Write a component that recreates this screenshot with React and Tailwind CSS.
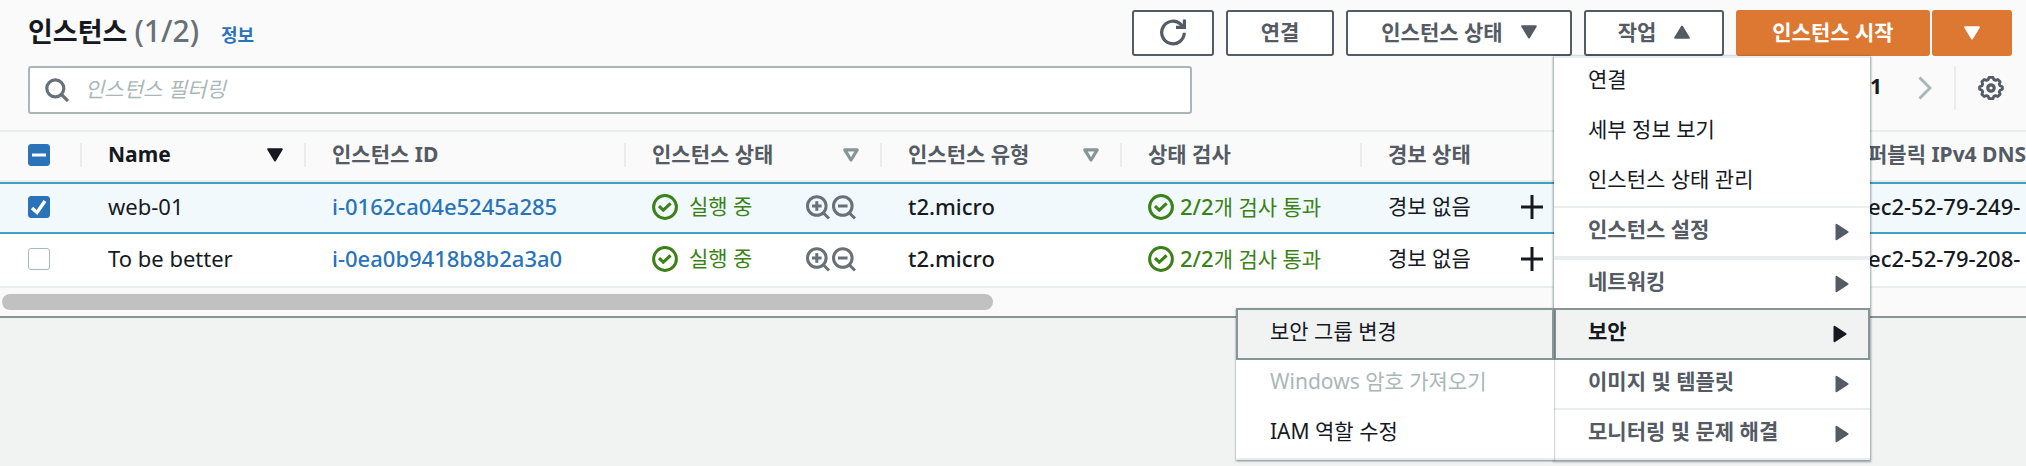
import React, { useState } from "react";

const instances = [
  { name: "web-01", id: "i-0162ca04e5245a285", type: "t2.micro", dns: "ec2-52-79-249-" },
  { name: "To be better", id: "i-0ea0b9418b8b2a3a0", type: "t2.micro", dns: "ec2-52-79-208-" },
];

const columns = [
  { label: "Name", sort: "active" },
  { label: "인스턴스 ID" },
  { label: "인스턴스 상태", sort: "idle" },
  { label: "인스턴스 유형", sort: "idle" },
  { label: "상태 검사" },
  { label: "경보 상태" },
  { label: "" },
  { label: "퍼블릭 IPv4 DNS" },
];

const Triangle = ({ className = "" }) => (
  <svg viewBox="0 0 16 14" className={`w-4 h-[14px] shrink-0 ${className}`} aria-hidden="true">
    <path d="M1.2 1.2h13.6L8 12.5z" fill="currentColor" stroke="currentColor" strokeWidth="2" strokeLinejoin="round" />
  </svg>
);

const HollowTriangle = () => (
  <svg viewBox="0 0 16 14" className="w-4 h-[14px] shrink-0 text-[#879596]" aria-hidden="true">
    <path d="M1.8 1.8h12.4L8 12z" fill="none" stroke="currentColor" strokeWidth="3.2" strokeLinejoin="round" />
  </svg>
);

const RightTriangle = () => (
  <svg viewBox="0 0 14 18" className="w-[14px] h-[18px] shrink-0" aria-hidden="true">
    <path d="M1.5 1.8v14.4L12.6 9z" fill="currentColor" stroke="currentColor" strokeWidth="2" strokeLinejoin="round" />
  </svg>
);

const StatusOk = () => (
  <svg viewBox="0 0 26 26" className="w-[26px] h-[26px] shrink-0" fill="none" stroke="currentColor" strokeWidth="3" aria-hidden="true">
    <circle cx="13" cy="13" r="11.4" />
    <path d="M7 12.2l4.3 4L18.6 9.3" />
  </svg>
);

const ZoomIcon = ({ plus }) => (
  <svg viewBox="0 0 24 26" className="w-6 h-[26px] shrink-0" fill="none" stroke="currentColor" strokeWidth="3" aria-hidden="true">
    <circle cx="10.8" cy="12" r="9.3" />
    <path d="M17 18.5l6 6M6 12h9.6" />
    {plus && <path d="M10.8 7.2v9.6" />}
  </svg>
);

const CheckBox = ({ label, checked, indeterminate, onChange }) => (
  <label className="grid w-[22px] h-[22px]">
    <input
      type="checkbox"
      aria-label={label}
      checked={checked}
      onChange={onChange}
      className="col-start-1 row-start-1 appearance-none w-[22px] h-[22px] rounded-[3px] border border-[#aab7b8] bg-white checked:border-[#2a73b9] checked:bg-[#2a73b9]"
    />
    {checked && (
      <svg viewBox="0 0 22 22" className="col-start-1 row-start-1 w-[22px] h-[22px] pointer-events-none" fill="none" stroke="#fff" strokeWidth="3">
        {indeterminate ? <path d="M4 11h14" /> : <path d="M4 12l5 4.5L17 5" strokeWidth="3.4" />}
      </svg>
    )}
  </label>
);

const MenuItem = ({ children, submenu }) => (
  <button
    role="menuitem"
    className={`flex w-full h-12 items-center justify-between pl-[34px] pr-[21px] text-left ${
      submenu ? "font-bold text-[#545b64]" : ""
    }`}
  >
    <span className="pb-1.5">{children}</span>
    {submenu && <RightTriangle />}
  </button>
);

const ActionsMenu = () => (
  <div
    role="menu"
    className="absolute z-10 top-full -left-[30px] w-[316px] border-y-2 border-[#eaeded] bg-white shadow-[0_1px_2px_1px_rgba(0,28,36,0.4)]"
  >
    <div className="flex flex-col gap-0.5">
      <MenuItem>연결</MenuItem>
      <MenuItem>세부 정보 보기</MenuItem>
      <MenuItem>인스턴스 상태 관리</MenuItem>
    </div>
    <div className="border-t-2 border-b-4 border-[#eaeded]">
      <MenuItem submenu>인스턴스 설정</MenuItem>
    </div>
    <MenuItem submenu>네트워킹</MenuItem>
    <div className="relative">
      <button
        role="menuitem"
        aria-expanded="true"
        className="flex w-full h-[52px] items-center justify-between border-2 border-[#879596] bg-[#f1f3f3] pl-8 pr-[21px] text-left font-bold"
      >
        <span className="pb-1.5">보안</span>
        <RightTriangle />
      </button>
      <div
        role="menu"
        className="absolute top-0 right-full w-[318px] border-b-2 border-[#eaeded] bg-white shadow-[0_1px_2px_0_rgba(0,28,36,0.5)]"
      >
        <button
          role="menuitem"
          className="flex w-full h-[52px] items-center border-2 border-[#879596] bg-[#f1f3f3] pl-8 pb-1.5 text-left"
        >
          보안 그룹 변경
        </button>
        <div className="flex flex-col gap-0.5">
          <button role="menuitem" disabled className="flex h-12 items-center pl-[34px] pb-1.5 text-[#aab7b8]">
            Windows 암호 가져오기
          </button>
          <MenuItem>IAM 역할 수정</MenuItem>
        </div>
      </div>
    </div>
    <MenuItem submenu>이미지 및 템플릿</MenuItem>
    <div className="border-t-2 border-[#eaeded]">
      <MenuItem submenu>모니터링 및 문제 해결</MenuItem>
    </div>
  </div>
);

const buttonClass =
  "flex h-[46px] items-center justify-center rounded-[3px] border-2 border-[#545b64] bg-white pb-0.5 font-bold text-[#545b64]";

const App = () => {
  const [selected, setSelected] = useState([0]);
  const [filter, setFilter] = useState("");

  const toggle = (i) =>
    setSelected(selected.includes(i) ? selected.filter((s) => s !== i) : [...selected, i]);

  return (
    <div className="min-h-screen overflow-hidden bg-[#f1f3f3] font-['Noto_Sans','Noto_Sans_CJK_KR',sans-serif] text-[21px] leading-7 text-[#16191f]">
      <main className="border-b-2 border-[#879596] bg-[#fafafa] pb-1.5">
        {/* Header */}
        <header className="flex items-start justify-between pt-2.5 pl-7 pr-3.5">
          <div className="flex items-baseline">
            <h1 className="text-[27px] leading-[42px] font-bold">
              인스턴스 <span className="text-[30px] font-medium text-[#687078]">({selected.length}/2)</span>
            </h1>
            <a href="#info" className="ml-[22px] text-[18px] font-bold text-[#2a73b9]">정보</a>
          </div>
          <div className="flex gap-3">
            <button aria-label="새로 고침" className={`${buttonClass} w-[82px]`}>
              <svg viewBox="0 0 28 28" className="w-7 h-7" fill="none" stroke="currentColor" strokeWidth="3.2">
                <path d="M25.3 14.8a11.3 11.3 0 1 1-3.2-8.2l2.4 2.6" />
                <path d="M25.4 1.5v7.8h-8.4" />
              </svg>
            </button>
            <button className={`${buttonClass} w-[108px]`}>연결</button>
            <button className={`${buttonClass} w-[226px] gap-[18px]`}>
              인스턴스 상태 <Triangle />
            </button>
            <div className="relative">
              <button aria-expanded="true" className={`${buttonClass} w-[140px] gap-[18px]`}>
                작업 <Triangle className="rotate-180" />
              </button>
              <ActionsMenu />
            </div>
            <div className="flex gap-0.5 font-bold text-white">
              <button className="h-[46px] w-[194px] rounded-[3px] bg-[#dd7833] pb-0.5">인스턴스 시작</button>
              <button aria-label="시작 옵션" className="flex h-[46px] w-20 items-center justify-center rounded-[3px] bg-[#dd7833]">
                <Triangle />
              </button>
            </div>
          </div>
        </header>

        {/* Filter and pagination */}
        <div className="flex items-start justify-between pt-2.5 pb-4 pl-7 pr-[22px]">
          <div className="flex h-12 w-[1164px] items-center rounded-[3px] border-2 border-[#aab7b8] bg-white pl-[15px]">
            <svg viewBox="0 0 24 24" className="w-6 h-6 shrink-0 text-[#687078]" fill="none" stroke="currentColor" strokeWidth="3.2">
              <circle cx="10.3" cy="10.3" r="8.5" />
              <path d="M16 16l7 7" />
            </svg>
            <input
              type="text"
              aria-label="인스턴스 필터링"
              placeholder="인스턴스 필터링"
              value={filter}
              onChange={(e) => setFilter(e.target.value)}
              className="ml-4 w-full pb-0.5 outline-none placeholder:italic placeholder:text-[#aab7b8]"
            />
          </div>
          <div className="flex h-11 items-center">
            <span className="pb-1 font-bold">1</span>
            <button aria-label="다음 페이지" className="ml-9 text-[#aab7b8]">
              <svg viewBox="0 0 14 24" className="w-[14px] h-6" fill="none" stroke="currentColor" strokeWidth="3">
                <path d="M1.5 1.5L12 12 1.5 22.5" />
              </svg>
            </button>
            <button aria-label="기본 설정" className="ml-[22px] h-11 border-l-2 border-[#eaeded] pl-[22px] text-[#545b64]">
              <svg viewBox="0 0 26 26" className="w-[26px] h-[26px]" fill="none" stroke="currentColor" strokeWidth="2.8" strokeLinejoin="round">
                <path d="M11 2.4h4l.8 2.2 1.8.8 2.2-.9 2.4 2.3-.9 2.300.8 1.700 2.300.9v2.600l-2.300.9-.8 1.700.9 2.300-2.400 2.300-2.200-.9-1.800.8-.8 2.200h-4l-.8-2.200-1.800-.8-2.200.9-2.400-2.300.9-2.300-.8-1.700-2.300-.9v-2.600l2.300-.9.8-1.700-.9-2.300 2.400-2.300 2.200.9 1.800-.8z" />
                <circle cx="13" cy="13" r="3.2" strokeWidth="3.2" />
              </svg>
            </button>
          </div>
        </div>

        {/* Instances table */}
        <table className="w-full table-fixed border-separate border-spacing-0 whitespace-nowrap">
          <colgroup>
            <col className="w-20" />
            <col className="w-56" />
            <col className="w-80" />
            <col className="w-64" />
            <col className="w-60" />
            <col className="w-60" />
            <col className="w-60" />
            <col className="w-60" />
            <col />
          </colgroup>
          <thead>
            <tr className="h-[52px] text-left text-[#545b64] *:border-y-2 *:border-[#eaeded] *:pb-0.5">
              <th className="pl-7">
                <CheckBox
                  label="모두 선택"
                  checked={selected.length > 0}
                  indeterminate={selected.length < instances.length}
                  onChange={() => setSelected(selected.length ? [] : [0, 1])}
                />
              </th>
              {columns.map((col) => (
                <th key={col.label} className="overflow-hidden">
                  <div
                    className={`flex h-6 items-center justify-between border-l-2 border-[#eaeded] pl-[26px] pr-[21px] ${
                      col.sort === "active" ? "text-[#16191f]" : ""
                    }`}
                  >
                    <span className="pb-0.5">{col.label}</span>
                    {col.sort === "active" && <Triangle />}
                    {col.sort === "idle" && <HollowTriangle />}
                  </div>
                </th>
              ))}
            </tr>
          </thead>
          <tbody>
            {instances.map((row, i) => (
              <tr
                key={row.id}
                className={
                  selected.includes(i)
                    ? "h-[52px] bg-[#f1f9fd] *:border-y-2 *:border-[#3fa0c6] *:pb-0.5"
                    : "h-[54px] bg-white *:border-b-2 *:border-[#eaeded] *:pb-0.5"
                }
              >
                <td className="pl-7">
                  <CheckBox label={row.name} checked={selected.includes(i)} onChange={() => toggle(i)} />
                </td>
                <td className="pl-7 text-[22px]">
                  <div className="pb-0.5">{row.name}</div>
                </td>
                <td className="pl-7 text-[22px] font-medium">
                  <div className="pb-0.5">
                    <a href={`#${row.id}`} className="text-[#2a73b9]">{row.id}</a>
                  </div>
                </td>
                <td className="pl-7">
                  <div className="flex items-center text-[#3a8116]">
                    <StatusOk />
                    <span className="ml-[11px] pb-0.5">실행 중</span>
                    <span className="ml-auto mr-6 flex gap-0.5 text-[#687078]">
                      <ZoomIcon plus />
                      <ZoomIcon />
                    </span>
                  </div>
                </td>
                <td className="pl-7 text-[22px] font-medium">
                  <div className="pb-0.5">{row.type}</div>
                </td>
                <td className="pl-7">
                  <div className="flex items-center gap-1.5 text-[#3a8116]">
                    <StatusOk />
                    <span className="pb-0.5">
                      <span className="text-[22px] font-medium">2/2</span>개 검사 통과
                    </span>
                  </div>
                </td>
                <td className="pl-7">
                  <div className="flex items-center justify-between pr-[57px]">
                    <span className="pb-0.5">경보 없음</span>
                    <button aria-label="경보 추가">
                      <svg viewBox="0 0 22 24" className="w-[22px] h-6" fill="none" stroke="currentColor" strokeWidth="3">
                        <path d="M0 12h22M11 0v24" />
                      </svg>
                    </button>
                  </div>
                </td>
                <td />
                <td className="overflow-hidden pl-7 text-[22px] font-medium">
                  <div className="pb-0.5">{row.dns}</div>
                </td>
              </tr>
            ))}
          </tbody>
        </table>

        {/* Horizontal scrollbar */}
        <div className="px-0.5 pt-1.5">
          <div className="h-4 w-[49%] rounded-full bg-[#c1c1c1]" />
        </div>
      </main>
    </div>
  );
};

export default App;
